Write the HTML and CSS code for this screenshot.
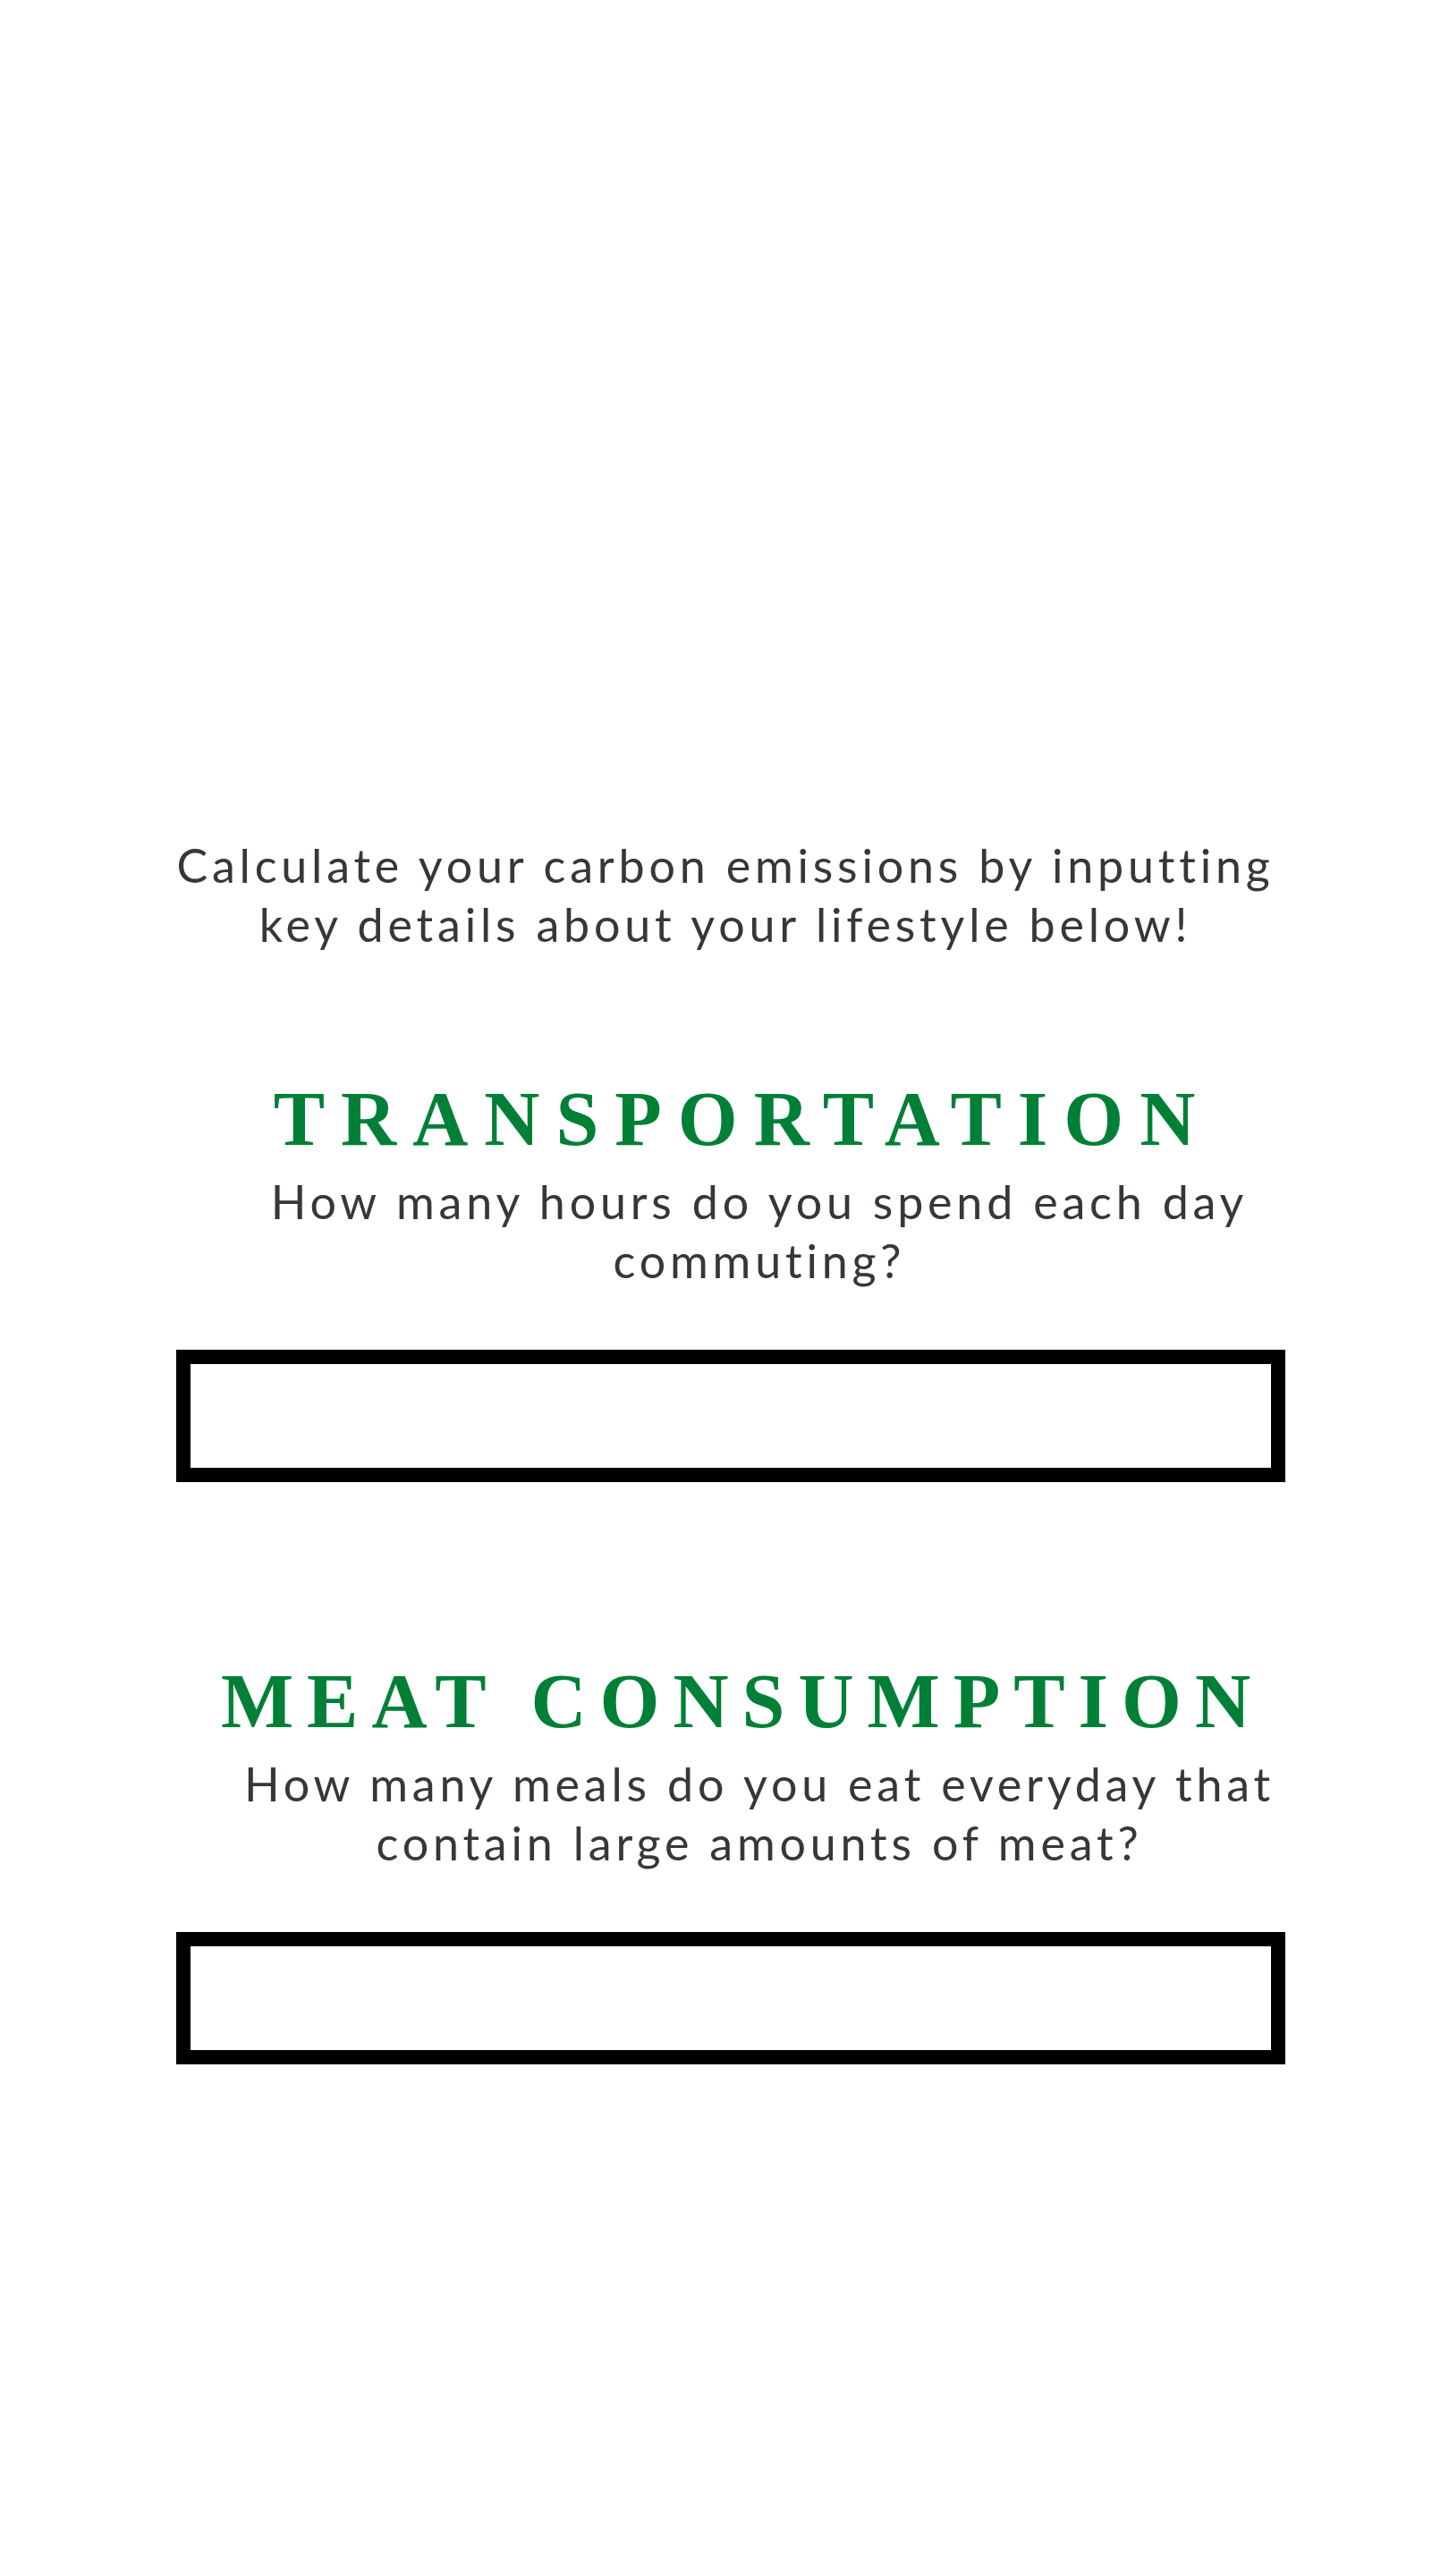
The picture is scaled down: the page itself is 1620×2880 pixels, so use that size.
FILE: index.html
```html
<!DOCTYPE html>
<html lang="en">
<head>
<meta charset="utf-8">
<title>Carbon Calculator</title>
<link rel="stylesheet" href="styles.css">
</head>
<body>
<main class="page">
  <p class="intro">Calculate your carbon emissions by inputting<br>key details about your lifestyle below!</p>
  <section class="block block-transport">
    <h2 class="heading heading-transport">TRANSPORTATION</h2>
    <p class="question">How many hours do you spend each day<br>commuting?</p>
    <div class="input-box"></div>
  </section>
  <section class="block block-meat">
    <h2 class="heading heading-meat">MEAT CONSUMPTION</h2>
    <p class="question">How many meals do you eat everyday that<br>contain large amounts of meat?</p>
    <div class="input-box"></div>
  </section>
</main>
</body>
</html>
```
FILE: styles.css
```css
html, body {
  margin: 0;
  padding: 0;
  background: #ffffff;
}
.page {
  width: 1620px;
  height: 2880px;
  padding-top: 934px;
  box-sizing: border-box;
  display: flex;
  flex-direction: column;
}
.intro, .question {
  margin: 0;
  font-family: "Lato", "Open Sans", sans-serif;
  font-size: 52px;
  line-height: 66px;
  color: #3a3636;
  text-align: center;
  letter-spacing: 4.8px;
}
.intro {
  padding-left: 2px;
}
.block {
  display: flex;
  flex-direction: column;
}
.block-transport {
  margin-top: 142px;
}
.block-meat {
  margin-top: 202px;
}
.heading {
  margin: 0;
  font-family: "Liberation Serif", serif;
  font-weight: bold;
  font-size: 86px;
  line-height: 86px;
  color: #008037;
  text-align: center;
  padding-left: 40px;
  letter-spacing: 18px;
}
.heading-meat {
  letter-spacing: 15px;
  word-spacing: 0;
}
.question {
  margin-top: 16px;
  padding-left: 78px;
}
.input-box {
  margin-top: 67px;
  margin-left: 197px;
  width: 1240px;
  height: 148px;
  box-sizing: border-box;
  border: 16px solid #000000;
  background: #ffffff;
}
```
